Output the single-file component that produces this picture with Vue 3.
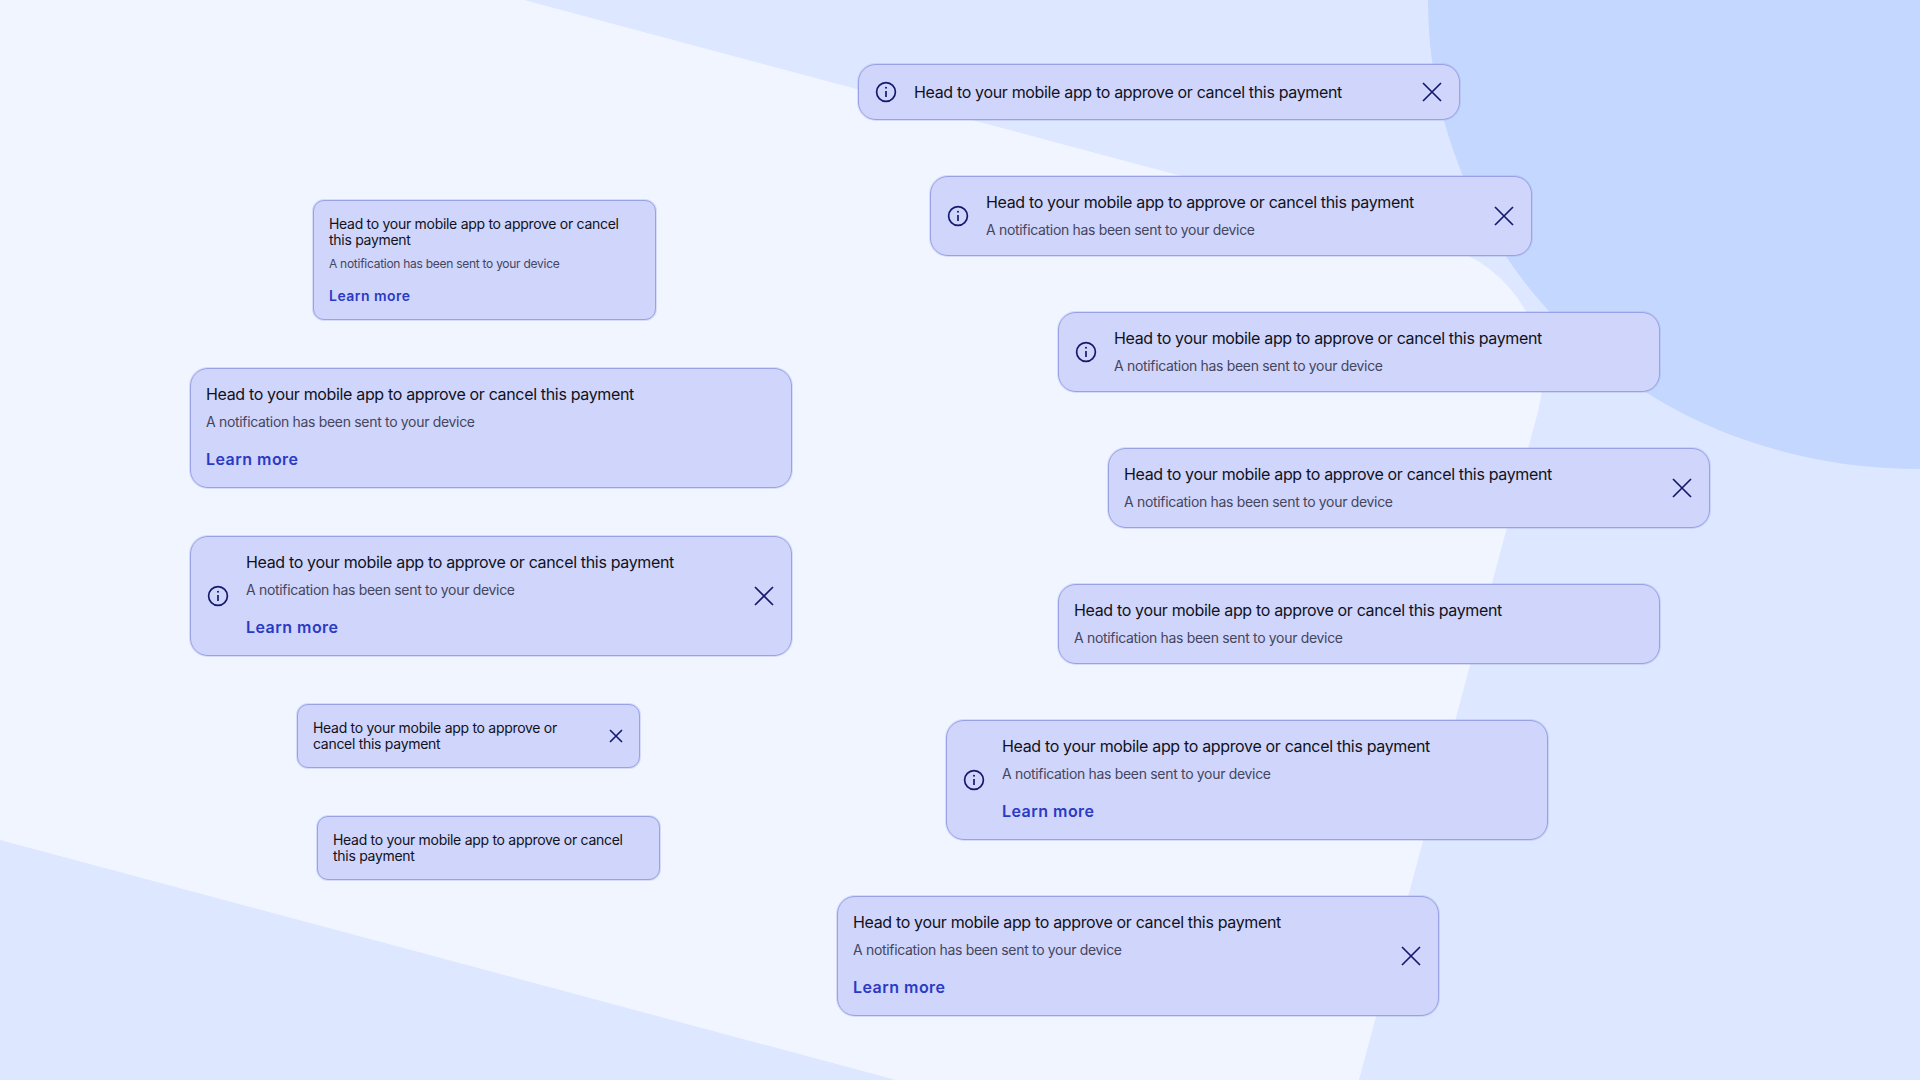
<template>
  <div class="page">
    <svg class="backdrop" width="1920" height="1080" viewBox="0 0 1920 1080">
      <path d="M524 0 L1442.6 246 A135 135 0 0 1 1538 411.4 L1359 1080 L1920 1080 L1920 0 Z" fill="#dde7ff" />
      <path d="M0 840 L896 1080 L0 1080 Z" fill="#dde7ff" />
      <path d="M1428 0 C1428 250 1630 469 1920 469 L1920 0 Z" fill="#c4d7ff" />
    </svg>

    <div
      v-for="(item, i) in banners"
      :key="i"
      class="banner"
      :class="{ small: item.small }"
      :style="{ left: item.x + 'px', top: item.y + 'px' }"
    >
      <svg v-if="item.icon" class="icon" viewBox="0 0 24 24" fill="none">
        <circle cx="12" cy="12" r="9.4" />
        <path d="M12 11v6" />
        <circle class="dot" cx="12" cy="7.8" r="1" />
      </svg>

      <div class="body">
        <div class="title">Head to your mobile app to approve or cancel this payment</div>
        <div v-if="item.sub" class="sub">A notification has been sent to your device</div>
        <a v-if="item.link" class="link">Learn more</a>
      </div>

      <svg v-if="item.close" class="close" viewBox="0 0 24 24" fill="none">
        <path d="M3 3l18 18M21 3L3 21" />
      </svg>
    </div>
  </div>
</template>

<script setup>
// 每个通知在画布上的位置
const banners = [
  { x: 858, y: 64, icon: true, close: true },
  { x: 930, y: 176, icon: true, close: true, sub: true },
  { x: 1058, y: 312, icon: true, sub: true },
  { x: 1108, y: 448, close: true, sub: true },
  { x: 1058, y: 584, sub: true },
  { x: 946, y: 720, icon: true, sub: true, link: true },
  { x: 837, y: 896, close: true, sub: true, link: true },
  { x: 313, y: 200, small: true, sub: true, link: true },
  { x: 190, y: 368, sub: true, link: true },
  { x: 190, y: 536, icon: true, close: true, sub: true, link: true },
  { x: 297, y: 704, small: true, close: true },
  { x: 317, y: 816, small: true }
]
</script>

<style scoped>
.page {
  position: relative;
  width: 1920px;
  height: 1080px;
  overflow: hidden;
  background-color: #f1f5ff;
  font-family: Inter, "Noto Sans", sans-serif;
}

.backdrop {
  position: absolute;
  left: 0;
  top: 0;
}

.banner {
  position: absolute;
  box-sizing: border-box;
  width: 602px;
  display: flex;
  align-items: center;
  gap: 16px;
  padding: 15px;
  background-color: #d0d5fb;
  border: 1px solid #98a2e5;
  border-radius: 18px;
  box-shadow: 0 0 0 1px rgba(152, 162, 229, 0.3);
}

.banner.small {
  width: 343px;
  border-radius: 11px;
}

.icon,
.close {
  flex: none;
  width: 24px;
  height: 24px;
  stroke: #15196e;
  stroke-width: 1.7;
}

.small .close {
  width: 16px;
  height: 16px;
  stroke-width: 2.4;
}

.icon .dot {
  fill: #15196e;
  stroke: none;
}

.body {
  flex: 1;
  min-width: 0;
}

.title {
  font-size: 16px;
  line-height: 20px;
  letter-spacing: -0.34px;
  color: #11121c;
}

.sub {
  margin-top: 8px;
  font-size: 14px;
  line-height: 20px;
  letter-spacing: -0.32px;
  color: #44465e;
}

.link {
  display: block;
  margin-top: 15px;
  margin-bottom: 1px;
  font-size: 16px;
  line-height: 24px;
  font-weight: 600;
  letter-spacing: 0.47px;
  color: #2a3ac4;
}

.small .title {
  font-size: 14px;
  line-height: 16px;
  letter-spacing: -0.29px;
}

.small .sub {
  margin-top: 8px;
  font-size: 12px;
  line-height: 16px;
  letter-spacing: -0.27px;
}

.small .link {
  margin-top: 16px;
  margin-bottom: 0;
  font-size: 14px;
  line-height: 16px;
  letter-spacing: 0.47px;
}
</style>
